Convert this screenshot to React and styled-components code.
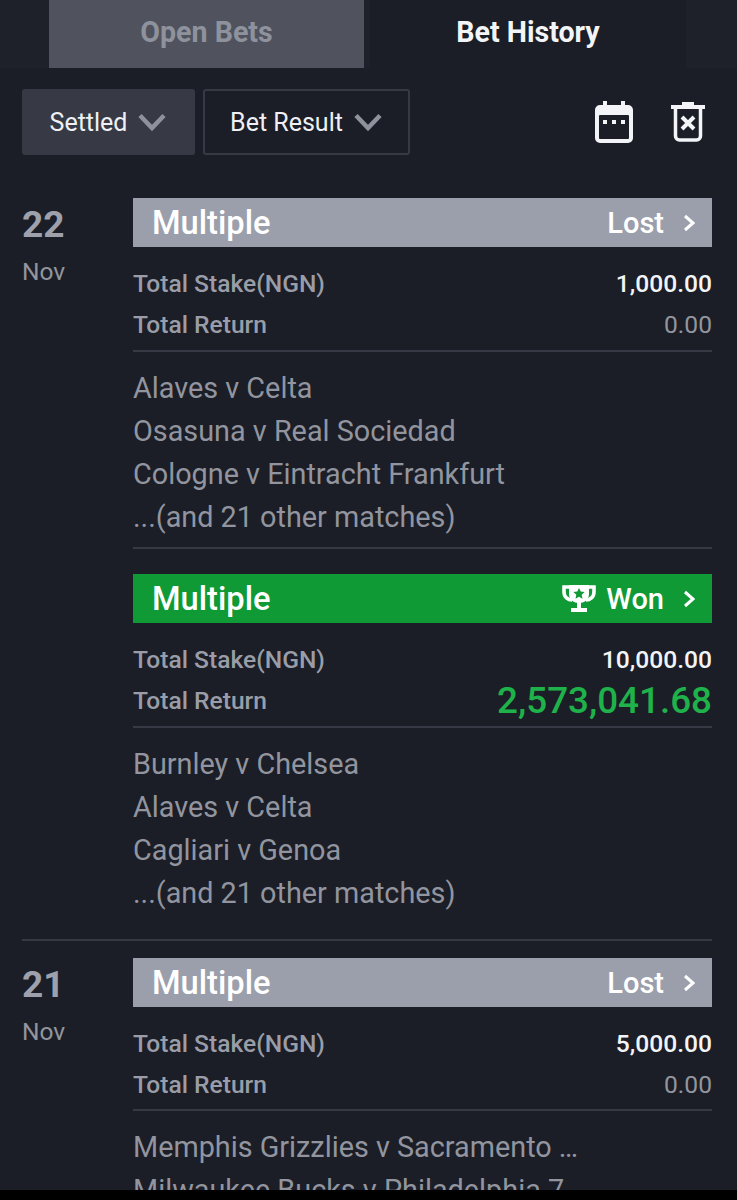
import React from "react";
import styled, { createGlobalStyle } from "styled-components";

const GlobalStyle = createGlobalStyle`
  html, body {
    margin: 0;
    padding: 0;
    background: #1b1e26;
  }
  body {
    font-family: Roboto, "Liberation Sans", sans-serif;
  }
`;

const Page = styled.div`
  position: relative;
  width: 737px;
  height: 1200px;
  overflow: hidden;
  background: #1b1e26;
`;

const Tabs = styled.div`
  display: flex;
  height: 68px;
  padding-left: 49px;
  background: #1e2129;
`;

const Tab = styled.div`
  width: ${(p) => (p.$active ? "316px" : "315px")};
  margin-right: ${(p) => (p.$active ? "0" : "6px")};
  display: flex;
  align-items: center;
  justify-content: center;
  font-size: 28.6px;
  font-weight: 700;
  padding-bottom: 4px;
  box-sizing: border-box;
  color: ${(p) => (p.$active ? "#f3f4f7" : "#8e929d")};
  background: ${(p) => (p.$active ? "#1b1e26" : "#50535e")};
`;

const Toolbar = styled.div`
  display: flex;
  align-items: center;
  padding: 21px 32px 43px 22px;
  height: 66px;
`;

const Filter = styled.div`
  box-sizing: border-box;
  height: 66px;
  width: ${(p) => p.$w}px;
  margin-right: 8px;
  display: flex;
  align-items: center;
  justify-content: center;
  gap: 10px;
  border-radius: 3px;
  font-size: 25px;
  color: #eef0f4;
  background: ${(p) => (p.$filled ? "#373a45" : "transparent")};
  border: ${(p) => (p.$filled ? "none" : "2px solid #373a45")};
`;

const ToolIcons = styled.div`
  margin-left: auto;
  display: flex;
  align-items: center;
  gap: 38px;
`;

const DayGroup = styled.section`
  display: flex;
  margin: ${(p) => p.$mt || 0}px 0 0 22px;
  width: 690px;
  border-bottom: ${(p) => (p.$rule ? "2px solid #373a45" : "none")};
  padding-bottom: ${(p) => p.$pb || 0}px;
`;

const DateCol = styled.div`
  width: 111px;
  flex: none;
`;

const DayNum = styled.div`
  font-size: 37px;
  font-weight: 700;
  line-height: 44px;
  margin-top: 5px;
  color: #9ea1ac;
`;

const Month = styled.div`
  font-size: 24.5px;
  line-height: 28px;
  margin-top: 11px;
  color: #92959f;
`;

const Bets = styled.div`
  flex: 1;
  min-width: 0;
`;

const Bet = styled.article`
  margin-bottom: ${(p) => p.$mb || 0}px;
`;

const BetHeader = styled.div`
  height: 49px;
  display: flex;
  align-items: center;
  padding: 0 17px 0 19px;
  color: #fff;
  background: ${(p) => (p.$won ? "#0f9a36" : "#9b9fab")};
`;

const BetType = styled.div`
  font-size: 32.7px;
  font-weight: 500;
`;

const BetResult = styled.div`
  margin-left: auto;
  display: flex;
  align-items: center;
  font-size: 29px;
  font-weight: 500;
`;

const Money = styled.div`
  height: 41px;
  display: flex;
  align-items: center;
  justify-content: space-between;
  font-size: 24.6px;
`;

const MoneyLabel = styled.span`
  font-weight: 500;
  color: #9a9da7;
`;

const MoneyValue = styled.span`
  font-weight: ${(p) => (p.$won || p.$bright ? 500 : 400)};
  font-size: ${(p) => (p.$won ? "36.8px" : "24.6px")};
  color: ${(p) => (p.$won ? "#1fb24a" : p.$bright ? "#f3f4f7" : "#92959f")};
`;

const Totals = styled.div`
  padding: 16px 0 ${(p) => (p.$tight ? 4 : 5)}px;
  border-bottom: 2px solid #373a45;
`;

const Matches = styled.div`
  padding-top: 15px;
  border-bottom: ${(p) => (p.$rule ? "2px solid #373a45" : "none")};
  padding-bottom: ${(p) => p.$pb || 0}px;
`;

const Match = styled.div`
  font-size: 28.8px;
  line-height: 43px;
  height: 43px;
  color: #92959f;
  white-space: nowrap;
`;

const BottomBar = styled.div`
  position: absolute;
  left: 0;
  right: 0;
  bottom: 0;
  height: 10px;
  background: #000;
`;

const ChevronRightSvg = styled.svg`
  margin-left: 19px;
`;

const TrophySvg = styled.svg`
  margin-right: 10px;
`;

const Chevron = () => (
  <svg width="30" height="20" viewBox="0 0 30 20" fill="none">
    <path d="M3 3.5 L15 16 L27 3.5" stroke="#8e929d" strokeWidth="4.5" />
  </svg>
);

const ChevronRight = () => (
  <ChevronRightSvg width="12" height="20" viewBox="0 0 12 20" fill="none">
    <path d="M2 3 L10 10 L2 17" stroke="#fff" strokeWidth="3" />
  </ChevronRightSvg>
);

const CalendarIcon = () => (
  <svg width="38" height="42" viewBox="0 0 38 42" fill="none">
    <path
      d="M8 0h4v4h14V0h4v4h3a5 5 0 0 1 5 5v28a5 5 0 0 1-5 5H5a5 5 0 0 1-5-5V9a5 5 0 0 1 5-5h3z"
      fill="#f3f4f7"
    />
    <rect x="4" y="14" width="30" height="24" rx="1" fill="#1b1e26" />
    <rect x="8" y="19" width="4" height="4" fill="#f3f4f7" />
    <rect x="17" y="19" width="4" height="4" fill="#f3f4f7" />
    <rect x="26" y="19" width="4" height="4" fill="#f3f4f7" />
  </svg>
);

const TrashIcon = () => (
  <svg width="34" height="40" viewBox="0 0 34 40" fill="none">
    <path d="M11 0h12v3h11v4H0V3h11z" fill="#f3f4f7" />
    <path d="M4.5 7v27a4 4 0 0 0 4 4h17a4 4 0 0 0 4-4V7" stroke="#f3f4f7" strokeWidth="3.5" />
    <path d="M11 15l12 12M23 15L11 27" stroke="#f3f4f7" strokeWidth="4" />
  </svg>
);

const TrophyIcon = () => (
  <TrophySvg width="34" height="30" viewBox="0 0 34 30" fill="none">
    <path d="M8 3H2v5c0 5 4 8 8 8M26 3h6v5c0 5-4 8-8 8" stroke="#fff" strokeWidth="3.6" />
    <path d="M7 1h20v9c0 6-5 9-10 9S7 16 7 10z" fill="#fff" />
    <rect x="15" y="18" width="4" height="6" fill="#fff" />
    <rect x="9" y="24" width="16" height="4" fill="#fff" />
    <path
      d="M17 4l1.7 3.6 3.9.5-2.9 2.7.8 3.9-3.5-2-3.5 2 .8-3.9-2.9-2.7 3.9-.5z"
      fill="#0f9a36"
    />
  </TrophySvg>
);

const BetCard = ({ won, result, stake, ret, matches, rule, pb, mb, tight }) => (
  <Bet $mb={mb}>
    <BetHeader $won={won}>
      <BetType>Multiple</BetType>
      <BetResult>
        {won && <TrophyIcon />}
        {result}
        <ChevronRight />
      </BetResult>
    </BetHeader>
    <Totals $tight={tight}>
      <Money>
        <MoneyLabel>Total Stake(NGN)</MoneyLabel>
        <MoneyValue $bright>{stake}</MoneyValue>
      </Money>
      <Money>
        <MoneyLabel>Total Return</MoneyLabel>
        <MoneyValue $won={won}>{ret}</MoneyValue>
      </Money>
    </Totals>
    <Matches $rule={rule} $pb={pb}>
      {matches.map((m) => (
        <Match key={m}>{m}</Match>
      ))}
    </Matches>
  </Bet>
);

export default function App() {
  return (
    <Page>
      <GlobalStyle />
      <Tabs>
        <Tab>Open Bets</Tab>
        <Tab $active>Bet History</Tab>
      </Tabs>
      <Toolbar>
        <Filter $filled $w={173}>
          Settled <Chevron />
        </Filter>
        <Filter $w={207}>
          Bet Result <Chevron />
        </Filter>
        <ToolIcons>
          <CalendarIcon />
          <TrashIcon />
        </ToolIcons>
      </Toolbar>
      <DayGroup $rule $pb={24}>
        <DateCol>
          <DayNum>22</DayNum>
          <Month>Nov</Month>
        </DateCol>
        <Bets>
          <BetCard
            result="Lost"
            stake="1,000.00"
            ret="0.00"
            rule
            pb={8}
            mb={25}
            matches={[
              "Alaves v Celta",
              "Osasuna v Real Sociedad",
              "Cologne v Eintracht Frankfurt",
              "...(and 21 other matches)",
            ]}
          />
          <BetCard
            won
            result="Won"
            stake="10,000.00"
            ret="2,573,041.68"
            matches={[
              "Burnley v Chelsea",
              "Alaves v Celta",
              "Cagliari v Genoa",
              "...(and 21 other matches)",
            ]}
          />
        </Bets>
      </DayGroup>
      <DayGroup $mt={17}>
        <DateCol>
          <DayNum>21</DayNum>
          <Month>Nov</Month>
        </DateCol>
        <Bets>
          <BetCard
            tight
            result="Lost"
            stake="5,000.00"
            ret="0.00"
            matches={["Memphis Grizzlies v Sacramento …", "Milwaukee Bucks v Philadelphia 7…"]}
          />
        </Bets>
      </DayGroup>
      <BottomBar />
    </Page>
  );
}
